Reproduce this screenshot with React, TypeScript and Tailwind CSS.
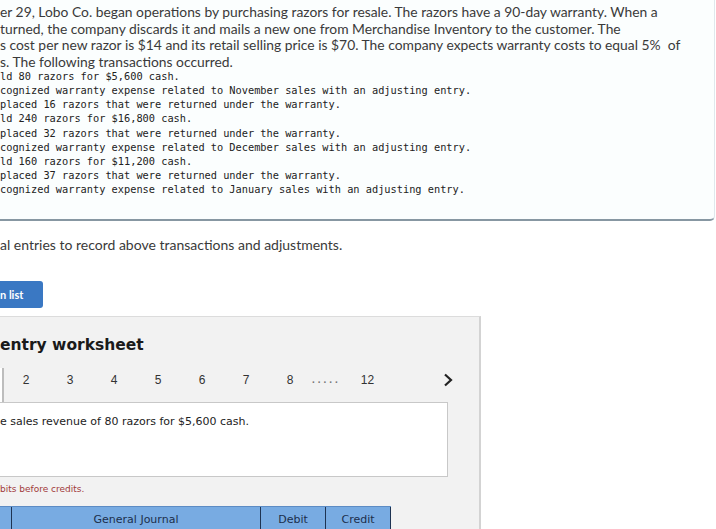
import React from 'react';

const intro = [
  'er 29, Lobo Co. began operations by purchasing razors for resale. The razors have a 90-day warranty. When a',
  'turned, the company discards it and mails a new one from Merchandise Inventory to the customer. The',
  's cost per new razor is $14 and its retail selling price is $70. The company expects warranty costs to equal 5%  of',
  's. The following transactions occurred.',
];

const events = [
  'ld 80 razors for $5,600 cash.',
  'cognized warranty expense related to November sales with an adjusting entry.',
  'placed 16 razors that were returned under the warranty.',
  'ld 240 razors for $16,800 cash.',
  'placed 32 razors that were returned under the warranty.',
  'cognized warranty expense related to December sales with an adjusting entry.',
  'ld 160 razors for $11,200 cash.',
  'placed 37 razors that were returned under the warranty.',
  'cognized warranty expense related to January sales with an adjusting entry.',
];

const tabs = ['2', '3', '4', '5', '6', '7', '8'];

export default function App() {
  return (
    <div className="w-[716px] h-[529px] overflow-hidden bg-white text-[#333]">
      {/* Question box */}
      <div className="w-[715px] pt-[4px] pb-[23px] bg-[#fbfefe] border-r border-[#dfe8ec] border-b-2 border-b-[#8797a2] rounded-br-[5px]">
        <div className="font-['Lato',sans-serif] text-[13.85px] leading-[16.5px] whitespace-pre text-[#3a3a3a]">
          {intro.map((l, i) => (
            <div key={i}>{l}</div>
          ))}
        </div>
        <div className="mt-[-1px] font-['DejaVu_Sans_Mono',monospace] text-[10.3px] leading-[14.15px] whitespace-pre text-[#222]">
          {events.map((l, i) => (
            <div key={i}>{l}</div>
          ))}
        </div>
      </div>

      <p className="mt-[15px] font-['Lato',sans-serif] text-[14px] leading-[17px] whitespace-nowrap text-[#3a3a3a]">
        al entries to record above transactions and adjustments.
      </p>

      <button className="mt-[28px] h-[27px] w-[43px] rounded-r-[3px] bg-[#3a78c3] text-left font-['Lato',sans-serif] text-[11px] font-bold text-white">
        n list
      </button>

      {/* Worksheet panel */}
      <div className="mt-[8px] w-[481px] h-[220px] bg-[#f2f2f2] border-t border-[#dcdcdc] border-r-2 border-r-[#d3d3d3]">
        <h2 className="pt-[17px] font-['DejaVu_Sans',sans-serif] text-[15.5px] font-bold leading-[22px] text-[#1a1a1a] whitespace-nowrap">
          entry worksheet
        </h2>

        <div className="mt-[12px] flex items-start h-[34px] font-['Liberation_Sans',sans-serif] text-[12px] leading-[16px]">
          <div className="h-[34px] w-[4px] bg-white border-r-2 border-[#bdbdbd]" />
          {tabs.map((t) => (
            <div key={t} className="w-[44px] pt-[4px] text-center">
              {t}
            </div>
          ))}
          <div className="w-[38px] pt-[4px] text-[10px] font-bold tracking-[3px] text-[#777]">.....</div>
          <div className="w-[35px] pt-[4px] text-center">12</div>
          <div className="ml-[58px] pt-[5px]">
            <svg width="10" height="14" viewBox="0 0 10 14">
              <path d="M2 1.5 L8 7 L2 12.5" fill="none" stroke="#222" strokeWidth="2.2" />
            </svg>
          </div>
        </div>

        <div className="w-[448px] h-[75px] bg-white border border-l-0 border-[#c8c8c8] pt-[11px] font-['DejaVu_Sans',sans-serif] text-[11px] whitespace-nowrap text-[#222]">
          e sales revenue of 80 razors for $5,600 cash.
        </div>

        <div className="mt-[6px] font-['DejaVu_Sans',sans-serif] text-[9px] leading-[12px] text-[#a13a3a] whitespace-nowrap">
          bits before credits.
        </div>

        <div className="mt-[11px] flex w-[391px] h-[24px] bg-[#78abe2] border-t border-[#5d8cc4] font-['DejaVu_Sans',sans-serif] text-[11px] text-[#1c2f4c]">
          <div className="w-[12px] border-r border-[#1e3352]" />
          <div className="w-[249px] border-r border-[#1e3352] flex items-start pt-[5px] justify-center">General Journal</div>
          <div className="w-[65px] border-r border-[#1e3352] flex items-start pt-[5px] justify-center">Debit</div>
          <div className="w-[65px] border-r border-[#1e3352] flex items-start pt-[5px] justify-center">Credit</div>
        </div>
      </div>
    </div>
  );
}
